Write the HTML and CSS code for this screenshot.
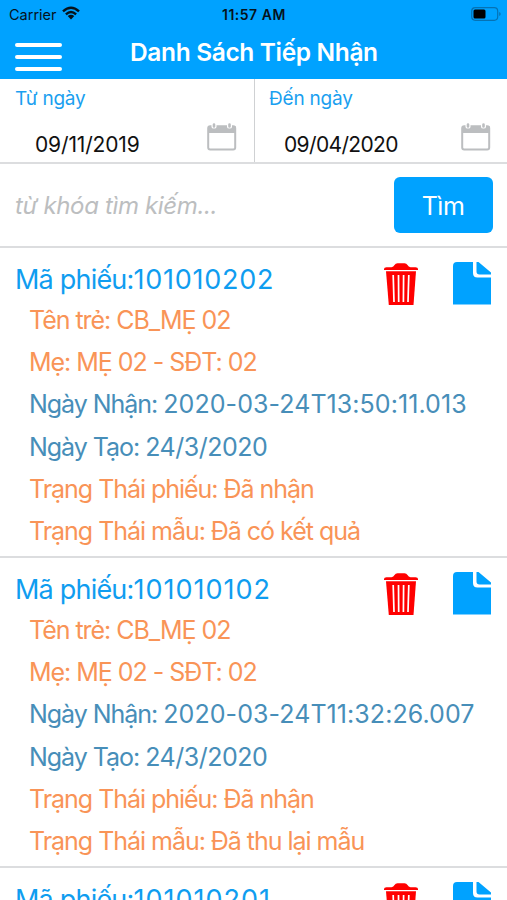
FILE: index.html
```html
<!DOCTYPE html>
<html lang="vi">
<head>
<meta charset="utf-8">
<meta name="viewport" content="width=device-width, initial-scale=1">
<title>Danh Sách Tiếp Nhận</title>
<link rel="stylesheet" href="styles.css">
</head>
<body>
<svg class="defs" width="0" height="0" aria-hidden="true">
  <symbol id="calendar" viewBox="0 0 30 28">
    <rect x="1.2" y="3.2" width="27" height="23.3" rx="2" fill="#fff" stroke="#bcbec0" stroke-width="2"/>
    <path d="M1 3h27.500v7H1z" fill="#bcbec0"/>
    <path d="M4.500 2v2q0 1.500 2.500 1.500T9.500 4V2zM20 2v2q0 1.500 2.500 1.500T25 4V2z" fill="#fff"/>
    <path d="M7 1.500v2M22.500 1.500v2" stroke="#bcbec0" stroke-width="2.600" stroke-linecap="round"/>
  </symbol>
  <symbol id="trash" viewBox="0 0 34 42">
    <path d="M0 7V6Q0 4.200 2.500 4.200H7.500Q9.500 4 10.500 2Q11.500.2 13.500.2h7q2 0 3 1.800 1 2 3 2.200h5Q34 4.200 34 6v1z" fill="#f00"/>
    <path d="M2 8.300h30L29.500 42H4.800z" fill="#f00"/>
    <path d="M9.200 12l.8 27M14.500 12l.2 27M19.600 12l-.2 27M24.800 12l-.8 27" stroke="#fff" stroke-width="1.700" fill="none"/>
  </symbol>
  <symbol id="file" viewBox="0 0 38 43">
    <path d="M4 0H20v11q0 4.500 4.500 4.500H38v27H0V4Q0 0 4 0z" fill="#00a2ff"/>
    <path d="M23.500 0h2L38 10.500v2H26.500q-3 0-3-3z" fill="#00a2ff"/>
  </symbol>
</svg>
<div class="screen">
  <header class="top">
    <div class="status">
      <span class="carrier">Carrier</span>
      <svg class="wifi" viewBox="0 0 18 14"><g fill="none" stroke="#06131c" stroke-width="2.400"><path d="M1 5.300Q9-2 17 5.300M3.900 8.300Q9 3.600 14.100 8.300"/></g><path d="M5.700 10.100Q9 7.300 12.300 10.100L9 13.500z" fill="#06131c"/></svg>
      <span class="clock">11:57 AM</span>
      <svg class="battery" viewBox="0 0 30 14"><rect x=".7" y=".7" width="26" height="12.600" rx="3.500" fill="none" stroke="#0572b4" stroke-width="1.200"/><rect x="2.500" y="2.500" width="12" height="9" rx="1.500"/><path d="M28.200 5q1.500.5 1.500 2t-1.500 2z" fill="#0572b4"/></svg>
    </div>
    <div class="nav">
      <div class="menu"><i></i><i></i><i></i></div>
      <h1>Danh Sách Tiếp Nhận</h1>
    </div>
  </header>
  <section class="dates">
    <div class="date"><label>Từ ngày</label><div class="pick"><span>09/11/2019</span><svg><use href="#calendar"/></svg></div></div>
    <div class="date to"><label>Đến ngày</label><div class="pick"><span>09/04/2020</span><svg><use href="#calendar"/></svg></div></div>
  </section>
  <section class="search"><span class="hint">từ khóa tìm kiếm...</span><button>Tìm</button></section>
  <main>
    <article>
      <div class="head"><h2>Mã phiếu:<b>101010202</b></h2><svg class="trash"><use href="#trash"/></svg><svg class="file"><use href="#file"/></svg></div>
      <p>Tên trẻ: CB_MẸ 02</p>
      <p>Mẹ: MẸ 02 - SĐT: 02</p>
      <p class="blue">Ngày Nhận: <b class="stamp">2020-03-24T13:50:11.013</b></p>
      <p class="blue">Ngày Tạo: <b>24/3/2020</b></p>
      <p>Trạng Thái phiếu: Đã nhận</p>
      <p>Trạng Thái mẫu: Đã có kết quả</p>
    </article>
    <article>
      <div class="head"><h2>Mã phiếu:<b class="wide">101010102</b></h2><svg class="trash"><use href="#trash"/></svg><svg class="file"><use href="#file"/></svg></div>
      <p>Tên trẻ: CB_MẸ 02</p>
      <p>Mẹ: MẸ 02 - SĐT: 02</p>
      <p class="blue">Ngày Nhận: <b class="stamp">2020-03-24T11:32:26.007</b></p>
      <p class="blue">Ngày Tạo: <b>24/3/2020</b></p>
      <p>Trạng Thái phiếu: Đã nhận</p>
      <p>Trạng Thái mẫu: Đã thu lại mẫu</p>
    </article>
    <article>
      <div class="head"><h2>Mã phiếu:<b class="wide">101010201</b></h2><svg class="trash"><use href="#trash"/></svg><svg class="file"><use href="#file"/></svg></div>
    </article>
  </main>
</div>
</body>
</html>
```
FILE: styles.css
```css
* { box-sizing: border-box; margin: 0; padding: 0; }
body { font-family: Inter, "Liberation Sans", sans-serif; background: #fff; }
b { font-weight: 400; }
.defs { position: absolute; }
.screen { width: 507px; height: 900px; overflow: hidden; white-space: nowrap; }
.top { height: 79px; background: #00a2ff; }
.status { height: 28px; display: grid; grid-template-columns: 53px 160px 66px 1fr 30px; align-items: center; padding: 0 6px 0 9px; color: #06131c; }
.carrier { font-size: 14.5px; }
.wifi { width: 18px; height: 14px; margin-bottom: 2px; }
.clock { font-size: 14px; font-weight: 600; letter-spacing: .5px; }
.battery { width: 30px; height: 14px; grid-column: 5; margin-bottom: 1px; }
.nav { display: flex; height: 51px; }
.menu { width: 47px; margin: 15px 0 0 15px; display: flex; flex-direction: column; gap: 8px; }
.menu i { height: 4px; border-radius: 2px; background: #fff; }
h1 { margin-left: 68px; line-height: 49px; font-size: 24.5px; font-weight: 600; letter-spacing: -.36px; color: #fff; }
.dates { display: grid; grid-template-columns: 254px 1fr; height: 85px; border-bottom: 2px solid #dcdddf; }
.date { padding: 8px 17px 0 15px; }
.to { border-left: 1px solid #cfd1d3; padding-left: 14px; padding-right: 16px; }
label { display: block; font-size: 19px; line-height: 24px; letter-spacing: -.2px; color: #1a9ff0; }
.pick { display: flex; justify-content: space-between; padding: 12px 0 0 20px; color: #111; }
.pick span { font-size: 21px; line-height: 26px; padding-top: 9px; letter-spacing: -.15px; }
.pick svg { width: 30px; height: 28px; }
.to .pick { padding-left: 15px; }
.to .pick span { letter-spacing: -.65px; }
.search { height: 84px; border-bottom: 2px solid #dcdddf; display: flex; align-items: center; justify-content: space-between; padding: 0 14px 0 15px; }
.hint { font-size: 24px; font-style: italic; letter-spacing: -.35px; color: #bcbec0; }
button { width: 99px; height: 56px; border: 0; border-radius: 6px; background: #00a2ff; color: #fff; font: 25px Inter, sans-serif; letter-spacing: -.5px; padding: 1px 1px 0 0; }
article { height: 310px; border-bottom: 2px solid #dcdddf; padding-left: 15px; }
.head { display: flex; height: 51px; padding: 14px 16px 0 0; }
h2 { font-size: 27px; line-height: 36px; font-weight: 400; letter-spacing: -.8px; color: #0f9df0; flex: 1; }
h2 b { letter-spacing: .75px; }
h2 .wide { letter-spacing: 1px; }
.trash { width: 34px; height: 42px; margin-top: 1px; }
.file { width: 38px; height: 43px; margin-left: 35px; }
p { margin-left: 14px; height: 42.2px; line-height: 42.2px; font-size: 25px; letter-spacing: -1.03px; color: #f99457; }
.blue { color: #478eb9; }
.blue b { letter-spacing: -.5px; }
.blue .stamp { letter-spacing: .07px; }
```
